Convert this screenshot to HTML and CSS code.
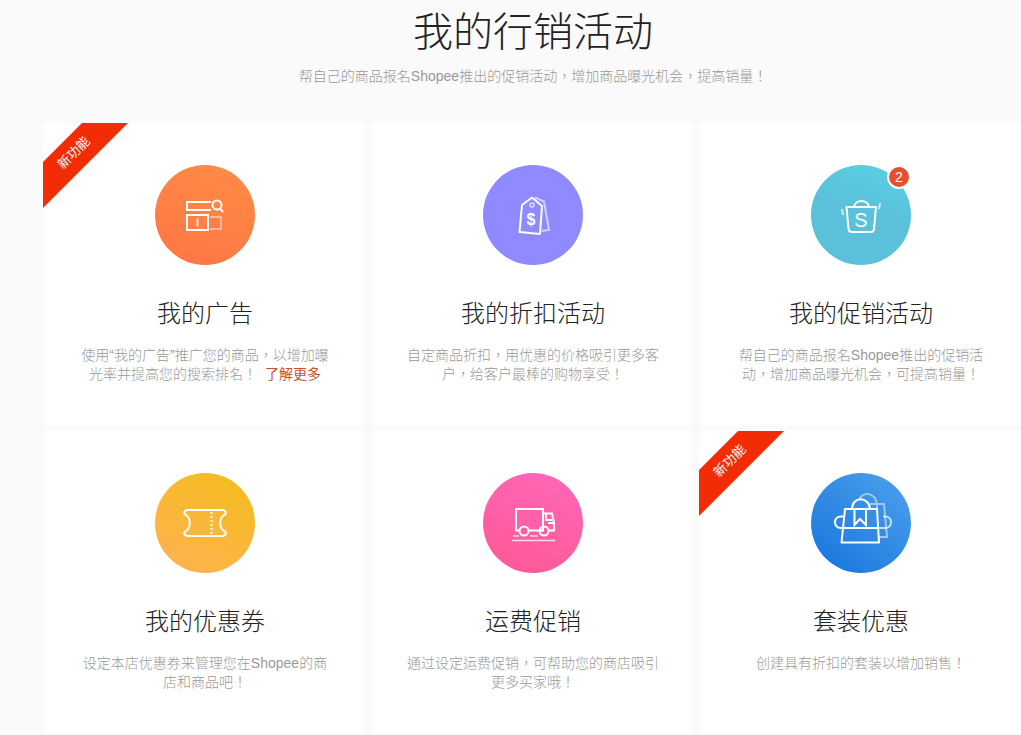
FILE: index.html
```html
<!DOCTYPE html>
<html lang="zh-CN">
<head>
    <meta charset="UTF-8">
    <meta name="viewport" content="width=device-width, initial-scale=1.0">
    <title>我的行销活动</title>
    <link rel="stylesheet" href="styles.css">
</head>
<body>
    <main class="marketing">
        <header class="page-header">
            <h1 class="page-title">我的行销活动</h1>
            <p class="page-subtitle" lang="zh-TW">帮自己的商品报名Shopee推出的促销活动，增加商品曝光机会，提高销量！</p>
        </header>

        <div class="card-grid">
            <section class="card">
                <div class="ribbon"><span class="ribbon-text">新功能</span></div>
                <div class="icon icon-ads">
                    <svg viewBox="0 0 100 100" fill="none" stroke="#fff" stroke-width="2">
                        <path d="M56 37H32V45H56"/>
                        <circle cx="62" cy="40" r="4.5"/>
                        <path d="M65 43.500L68 47"/>
                        <rect x="32" y="50" width="21" height="15"/>
                        <path d="M42.500 53.500V61.500" opacity=".8"/>
                        <path d="M55 52H66V64H55" stroke-width="1.500" opacity=".6"/>
                    </svg>
                </div>
                <h2 class="card-title">我的广告</h2>
                <p class="card-desc" lang="zh-TW">使用“我的广告”推广您的商品，以增加曝光率并提高您的搜索排名！<a class="more" href="#">了解更多</a></p>
            </section>

            <section class="card">
                <div class="icon icon-discount">
                    <svg viewBox="0 0 100 100" fill="none" stroke="#fff" stroke-width="2">
                        <path d="M52 32.500L61 36.500L66 65L59 66" stroke-width="2" opacity=".6"/>
                        <path d="M49 32.500L59 41L57 69L36.500 67L39 40Z" stroke-linejoin="round"/>
                        <circle cx="49" cy="40" r="2" stroke-width="1.500" opacity=".7"/>
                        <text class="glyph-dollar" x="48" y="60">$</text>
                    </svg>
                </div>
                <h2 class="card-title">我的折扣活动</h2>
                <p class="card-desc" lang="zh-TW">自定商品折扣，用优惠的价格吸引更多客户，给客户最棒的购物享受！</p>
            </section>

            <section class="card">
                <div class="icon icon-promo">
                    <svg viewBox="0 0 100 100" fill="none" stroke="#fff" stroke-width="2">
                        <path d="M35.500 42H65L63 64Q62.800 67 60 67H41Q38 67 37.500 64Z" stroke-linejoin="round"/>
                        <path d="M43 42C44 34 57 34 58 42"/>
                        <path d="M31 44L32 50M69 38L68 44" opacity=".7"/>
                        <text class="glyph-s" x="50" y="62">S</text>
                    </svg>
                    <span class="badge">2</span>
                </div>
                <h2 class="card-title">我的促销活动</h2>
                <p class="card-desc" lang="zh-TW">帮自己的商品报名Shopee推出的促销活动，增加商品曝光机会，可提高销量！</p>
            </section>

            <section class="card">
                <div class="icon icon-voucher">
                    <svg viewBox="0 0 100 100" fill="none" stroke="#fff" stroke-width="2">
                        <path d="M33 37H67C71 37 72 41 69 42C64 45 64 55 69 58C72 59 71 63 67 63H33C29 63 28 59 31 58C36 55 36 45 31 42C28 41 29 37 33 37Z" stroke-linejoin="round"/>
                        <path d="M56.500 39V62" stroke-dasharray="2 2"/>
                    </svg>
                </div>
                <h2 class="card-title">我的优惠券</h2>
                <p class="card-desc" lang="zh-TW">设定本店优惠券来管理您在Shopee的商店和商品吧！</p>
            </section>

            <section class="card">
                <div class="icon icon-shipping">
                    <svg viewBox="0 0 100 100" fill="none" stroke="#fff" stroke-width="2">
                        <path d="M36 57.500H33V36H60V57.500H46"/>
                        <path d="M60 40.500H69L71 50V57.500H66M56 57.500H60M70 50H65"/>
                        <path d="M63 41V47H69"/>
                        <circle cx="41" cy="58" r="4.500"/>
                        <circle cx="61" cy="58" r="4.500"/>
                        <path d="M30 63H36M47 63H55M29 67.500H72" stroke-width="1.500" opacity=".75"/>
                    </svg>
                </div>
                <h2 class="card-title">运费促销</h2>
                <p class="card-desc" lang="zh-TW">通过设定运费促销，可帮助您的商店吸引更多买家哦！</p>
            </section>

            <section class="card">
                <div class="ribbon"><span class="ribbon-text">新功能</span></div>
                <div class="icon icon-bundle">
                    <svg viewBox="0 0 100 100" fill="none" stroke="#fff" stroke-width="2">
                        <path d="M48 27C52 18 64 19 66 31M59 31H73L76 64H68M66 31V36" opacity=".5"/>
                        <path d="M34 36H66L68 69.500H30.500Z" stroke-linejoin="round"/>
                        <path d="M41 36C41 23 58 23 59 36"/>
                        <path d="M43.500 36V52L49 46L55 52V36"/>
                        <path d="M32 43.500H30C22 43.500 22 55 30 55H67"/>
                        <path d="M68 55H74C82 55 82 43.500 74 43.500H72" opacity=".7"/>
                    </svg>
                </div>
                <h2 class="card-title">套装优惠</h2>
                <p class="card-desc" lang="zh-TW">创建具有折扣的套装以增加销售！</p>
            </section>
        </div>
    </main>
</body>
</html>
```

FILE: styles.css
```css
body {
    margin: 0;
    background: #fafafa;
    font-family: "Liberation Sans", "Noto Sans CJK TC", sans-serif;
    color: #222;
}

.marketing {
    padding-left: 43px;
}

.page-header {
    text-align: center;
    padding: 5px 0 37px 2px;
}

.page-title {
    margin: 0;
    font-family: "Noto Sans CJK SC", sans-serif;
    font-size: 40px;
    font-weight: 300;
    line-height: 48px;
}

.page-subtitle {
    margin: 13px 0 0;
    font-size: 14px;
    font-weight: 300;
    line-height: 20px;
    color: #999;
}

.card-grid {
    display: grid;
    grid-template-columns: repeat(3, 1fr);
    gap: 6px;
}

.card {
    position: relative;
    display: flex;
    flex-direction: column;
    align-items: center;
    box-sizing: border-box;
    min-height: 302px;
    padding: 42px 32px 0 34px;
    background: #fff;
    text-align: center;
}

.icon {
    position: relative;
    width: 100px;
    height: 100px;
    border-radius: 50%;
}

.icon svg {
    display: block;
    width: 100px;
    height: 100px;
}

.icon-ads {
    background: linear-gradient(200deg, #ff8c45, #ff7545);
}

.icon-discount {
    background: #8f8aff;
}

.icon-promo {
    background: linear-gradient(200deg, #58d0e4 5%, #5bc0da 50%);
}

.icon-voucher {
    background: linear-gradient(210deg, #f4bd1a, #ffb155);
}

.icon-shipping {
    background: linear-gradient(200deg, #ff68b8, #ff5796);
}

.icon-bundle {
    background: linear-gradient(220deg, #4fa2ec, #1474dd);
}

.glyph-dollar,
.glyph-s {
    fill: #fff;
    stroke: none;
    text-anchor: middle;
}

.glyph-dollar {
    font-size: 16px;
    font-weight: bold;
}

.glyph-s {
    font-size: 20px;
}

.badge {
    position: absolute;
    top: 0;
    right: 0;
    width: 20px;
    height: 20px;
    border: 2px solid #fff;
    border-radius: 50%;
    background: #e7502e;
    color: #fff;
    font-size: 14px;
    line-height: 20px;
}

.card-title {
    margin: 31px 0 0;
    font-family: "Noto Sans CJK SC", sans-serif;
    font-size: 24px;
    font-weight: 300;
    line-height: 32px;
}

.card-desc {
    margin: 18px 0 0;
    font-size: 14px;
    font-weight: 300;
    line-height: 19px;
    color: #999;
}

.more {
    display: inline-block;
    margin-left: 8px;
    color: #c8502c;
    font-weight: 400;
    text-decoration: none;
}

/* corner flag */
.ribbon {
    position: absolute;
    top: 0;
    left: 0;
    width: 85px;
    height: 85px;
    background: #f22c05;
    clip-path: polygon(39px 0, 100% 0, 0 100%, 0 39px);
}

.ribbon-text {
    position: absolute;
    top: 20px;
    left: 0;
    width: 62px;
    color: #fff;
    font-size: 13px;
    line-height: 20px;
    text-align: center;
    transform: rotate(-45deg);
}
```
